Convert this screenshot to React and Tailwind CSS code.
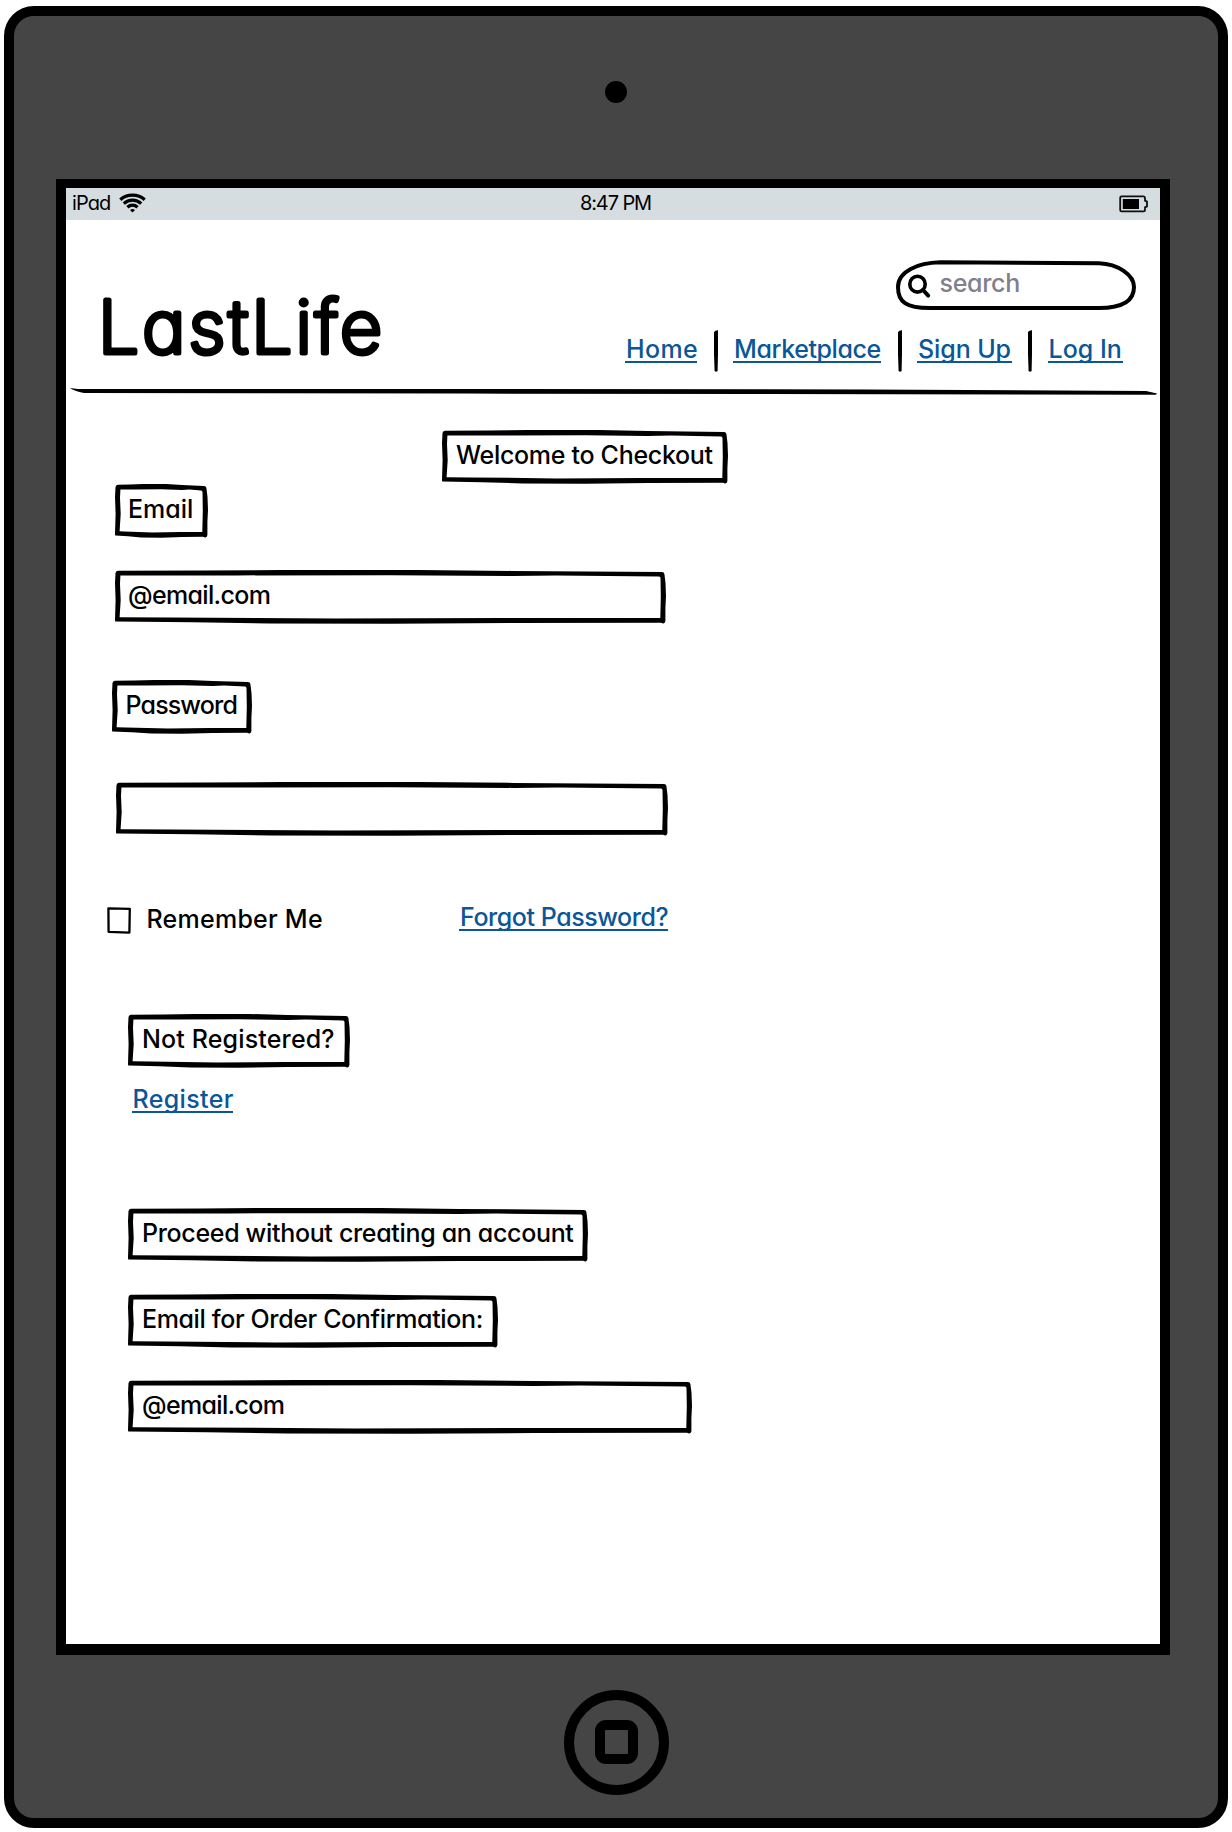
import React from "react";

/* Hand-drawn frame: one wobbly outline with a second one cut out of it. */
function framePath(w) {
  return [
    `M3 0.8 L${w * 0.16} 0.6 L${w * 0.3} 0 L${w * 0.55} 0 L${w * 0.72} 0.9 L${w - 4} 2`,
    `Q${w - 2} 2 ${w - 1.6} 4 L${w - 0.5} 13 L${w} 26 L${w - 0.6} 38 L${w - 0.6} 51`,
    `Q${w - 0.8} 53.6 ${w - 3} 53.4 L${w - 5} 52.8 L${w * 0.72} 53 L${w * 0.5} 53.8 L${w * 0.28} 53.4 L${w * 0.14} 52.2 L0.4 51.6`,
    `Q0 51.4 0 50 L0.6 30 L0 13 L0.5 3 Q1.2 0.9 3 0.8 Z`,
    `M5.4 5.4 L${w * 0.22} 5.4 L${w * 0.5} 5.2 L${w * 0.72} 5.9 L${w * 0.8} 5.5 L${w - 7} 6.4`,
    `Q${w - 5.6} 6.4 ${w - 5.5} 8 L${w - 5.2} 27 L${w - 5.7} 47.9`,
    `L${w * 0.7} 48 L${w * 0.4} 48.4 L${w * 0.1} 47.4 L4.6 47.2 L5.7 30 L5 14 Z`,
  ].join(" ");
}

function Box({ width, className, children }) {
  return (
    <div className={`grid w-fit ${className}`}>
      <svg width={width} height="54" className="col-start-1 row-start-1">
        <path d={framePath(width)} fill="#000" fillRule="evenodd" />
      </svg>
      <span className="col-start-1 row-start-1 pt-[10px] leading-[30px]">{children}</span>
    </div>
  );
}

function Link({ className, children }) {
  return (
    <a className={`block h-[29px] border-b-2 border-[#0b5697] pl-px leading-[30px] whitespace-nowrap text-[#0b5697] ${className}`}>
      {children}
    </a>
  );
}

function Separator() {
  return (
    <svg width="4" height="42" className="mr-[15.5px] ml-[16.5px] shrink-0">
      <path d="M0 2 Q1.5 0 4 0.2 L4 24 L3.6 41 Q2 42.6 0.6 41 L0 24 Z" />
    </svg>
  );
}

function Wifi() {
  return (
    <svg width="27" height="20" viewBox="0 0 27 20" fill="none" stroke="#000" strokeWidth="3.3">
      <path d="M1.3 6.8 C8 0.6 19 0.6 25.7 6.8" />
      <path d="M4.8 10.6 C9.7 6 17.3 6 22.2 10.6" />
      <path d="M8.4 14.2 C11.4 11.6 15.6 11.6 18.6 14.2" />
      <path d="M11 16.9 Q13.5 15 16 16.9 L13.5 19.4 Z" fill="#000" stroke="none" />
    </svg>
  );
}

function Battery() {
  return (
    <svg width="30" height="18" viewBox="0 0 30 18" fill="none" stroke="#0b0f0f" strokeWidth="1.8">
      <path d="M2.6 1.4 H24.6 Q26 1.4 26 3 V5.6 L28 6.6 V11.4 L26 12.4 V15 Q26 16.4 24.6 16.4 H2.6 Q1.2 16.4 1.2 15 V2.8 Q1.2 1.4 2.6 1.4 Z" />
      <rect x="3.8" y="4" width="16.2" height="10" fill="#000" stroke="none" />
    </svg>
  );
}

function StatusBar() {
  return (
    <div className="grid h-8 grid-cols-3 items-start bg-[#d6dde0] px-[6px] text-[20px] font-normal">
      <div className="flex pt-[3px]">
        <span className="w-[47px] leading-6 tracking-[-0.9px]">iPad</span>
        <div className="pt-[2px]">
          <Wifi />
        </div>
      </div>
      <span className="pt-[3px] pl-[5px] text-center leading-6 tracking-[-1.1px]">8:47 PM</span>
      <div className="flex justify-end pt-[7px] pr-[5px]">
        <Battery />
      </div>
    </div>
  );
}

function Search() {
  return (
    <div className="grid w-[240px]">
      <svg width="240" height="50" className="col-start-1 row-start-1" fill="none" stroke="#000" strokeWidth="4">
        <path d="M44 2.3 L203 3.3 C222 4 238 15 238 27 C238 42 224 48 203 48 L34 48 C10 48 2 42 2 27 C2 11 22 3 44 2.3 Z" />
        <ellipse cx="21.5" cy="24.2" rx="7.7" ry="7.9" strokeWidth="3.6" />
        <path d="M27 30 L32.2 35.6" strokeLinecap="round" />
      </svg>
      <span className="col-start-1 row-start-1 pt-[8px] pl-[43.5px] leading-[30px] tracking-[-0.3px] text-[#80808c]">search</span>
    </div>
  );
}

function Header() {
  return (
    <header className="flex h-[165px] justify-between pr-6 pl-[30px]">
      <svg width="300" height="110" className="mt-[45px] overflow-visible" role="img" aria-label="LastLife">
        <text
          x="2"
          y="88"
          textLength="284"
          className="fill-black stroke-black stroke-[5px] text-[73px] font-extralight [font-feature-settings:'cv11'] [stroke-linejoin:round]"
        >
          LastLife
        </text>
      </svg>
      <div className="flex flex-col items-end pt-10">
        <Search />
        <nav className="mt-5 mr-[13.5px] flex">
          <Link className="mt-1 w-[72px] tracking-[0.4px]">Home</Link>
          <Separator />
          <Link className="mt-1 w-[148px] tracking-[-0.4px]">Marketplace</Link>
          <Separator />
          <Link className="mt-1 w-[94.5px] tracking-[-0.1px]">Sign Up</Link>
          <Separator />
          <Link className="mt-1 w-[75px]">Log In</Link>
        </nav>
      </div>
    </header>
  );
}

function Divider() {
  return (
    <svg width="1094" height="12" className="block">
      <path d="M4 3 L12 4 L400 3.9 L800 4.4 L1080 6 L1091 8.4 L1090 9.8 L700 9 L400 8.6 L200 8.2 L18 8 Q8 6 4 3 Z" />
    </svg>
  );
}

function Checkout() {
  return (
    <main className="flex flex-col items-start">
      <Box width={286} className="mt-[33px] ml-[376px]">
        <span className="pl-[14px] tracking-[-0.3px]">Welcome to Checkout</span>
      </Box>
      <Box width={93} className="ml-[48.5px]">
        <span className="pl-[13.5px]">Email</span>
      </Box>
      <Box width={551} className="mt-8 ml-[48.5px]">
        <span className="pl-[13.5px] tracking-[-0.65px]">@email.com</span>
      </Box>
      <Box width={140} className="mt-[56px] ml-[46px]">
        <span className="pl-[13.5px] tracking-[-0.85px]">Password</span>
      </Box>
      <Box width={552} className="mt-12 ml-[50px]" />
      <div className="mt-[66px] flex h-[30px]">
        <svg width="24" height="27" className="mt-[5px] ml-[41px]" fill="none" stroke="#000">
          <path d="M1.4 1.4 L22.8 1.8 L22.4 25.6 L1.6 24.8 Z" strokeWidth="2.3" strokeLinejoin="round" />
        </svg>
        <span className="ml-[15.5px] w-[312.5px] pt-[2px] leading-[30px] tracking-[0.25px]">Remember Me</span>
        <Link className="w-[209px] tracking-[-0.45px]">Forgot Password?</Link>
      </div>
      <Box width={222} className="mt-[82px] ml-[62px]">
        <span className="pl-[14px] tracking-[0.15px]">Not Registered?</span>
      </Box>
      <Link className="mt-4 ml-[65.5px] w-[101.5px] tracking-[0.35px]">Register</Link>
      <Box width={460} className="mt-[95px] ml-[62px]">
        <span className="pl-[14px] tracking-[-0.33px]">Proceed without creating an account</span>
      </Box>
      <Box width={370} className="mt-8 ml-[62px]">
        <span className="pl-[14px] tracking-[-0.37px]">Email for Order Confirmation:</span>
      </Box>
      <Box width={564} className="mt-8 ml-[62px]">
        <span className="pl-[14px] tracking-[-0.65px]">@email.com</span>
      </Box>
    </main>
  );
}

export default function App() {
  return (
    <div className="h-[1832px] w-[1232px] bg-white pt-[6px] pl-1 font-[Inter,sans-serif] text-[25px] font-medium text-black [font-feature-settings:'cv11']">
      <div className="flex h-[1822px] w-[1224px] flex-col items-center rounded-[30px] border-10 border-black bg-[#454545]">
        <div className="mt-[65px] size-[22px] rounded-full bg-black" />
        <div className="mt-[76px] mr-[6px] h-[1476px] w-[1114px] border-x-10 border-t-9 border-b-11 border-black bg-white">
          <StatusBar />
          <Header />
          <Divider />
          <Checkout />
        </div>
        <div className="mt-[34.5px] flex size-[105px] items-center justify-center rounded-full border-10 border-black">
          <div className="h-11 w-[43px] rounded-[11px] border-10 border-black" />
        </div>
      </div>
    </div>
  );
}
